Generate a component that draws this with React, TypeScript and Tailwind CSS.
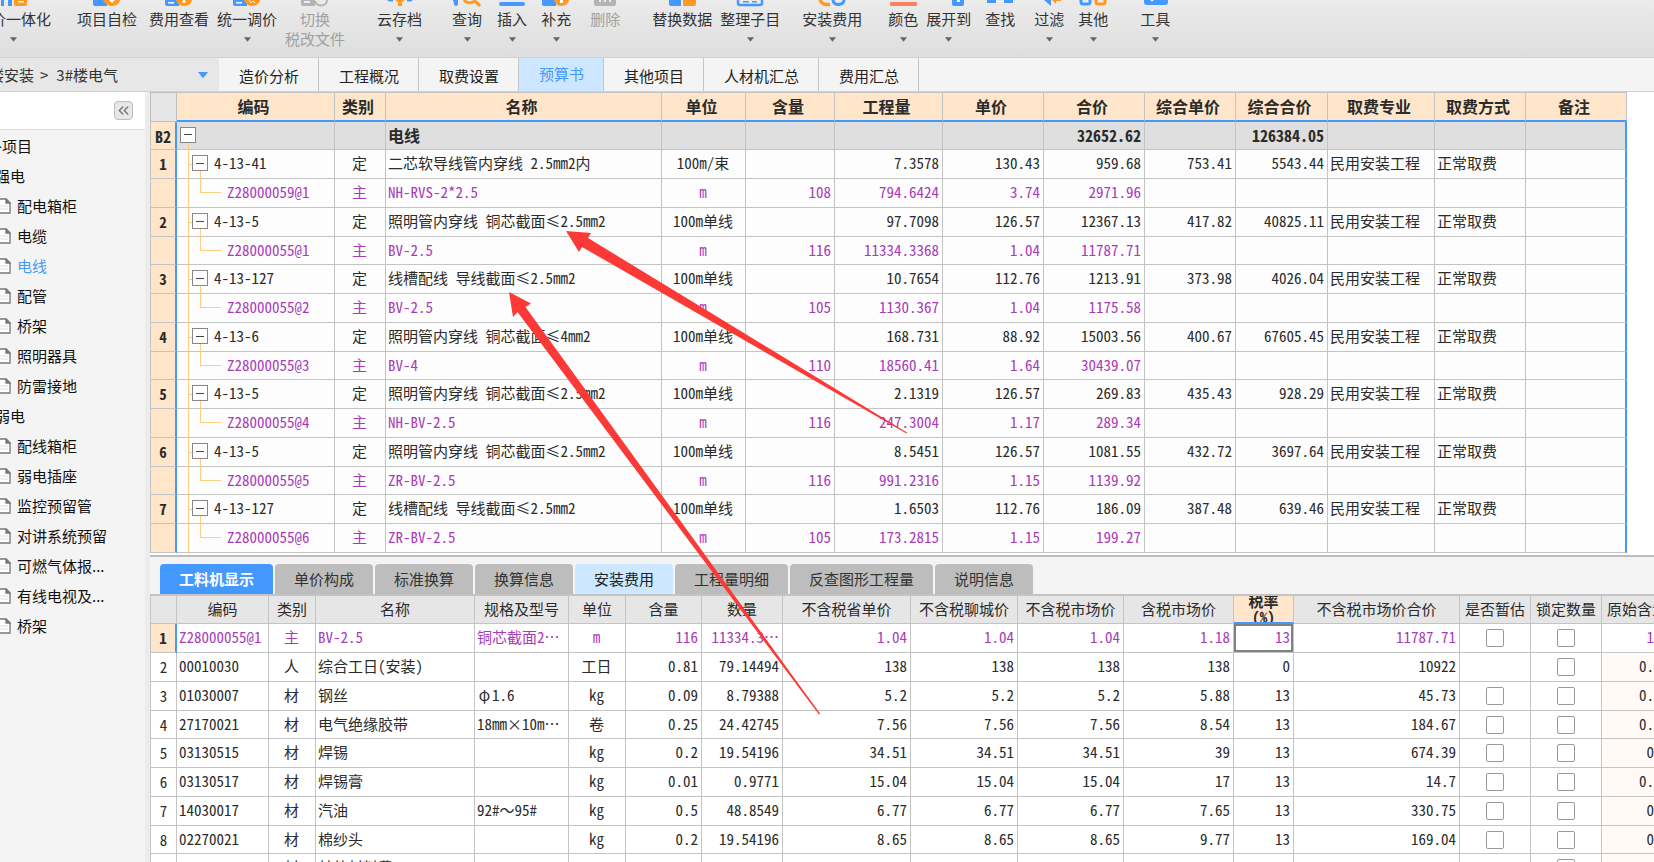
import type { ReactNode } from "react";
import { ChevronsLeft } from "lucide-react";
import clsx from "clsx";

type ToolItem = {
  label: string;
  sub?: string;
  gap: string;
  arrow?: boolean;
  disabled?: boolean;
  icon: ReactNode;
};

const BLUE = "#4499ff";
const ORANGE = "#ff9a1f";
const GRAY = "#b4b4b4";

// ツールバー
const toolItems: ToolItem[] = [
  {
    label: "量价一体化", gap: "-ml-6", arrow: true,
    icon: <><path d="M1 0h3v6H1zM8 0h4v6H8z" fill={BLUE} /><path d="M14 0h13v4a2 2 0 0 1-2 2h-9a2 2 0 0 1-2-2z" fill={ORANGE} /><path d="M18 1h6v1.500h-6z" fill="#fff" /></>,
  },
  {
    label: "项目自检", gap: "ml-6.5",
    icon: <><path d="M0 0h14v6H2a2 2 0 0 1-2-2z" fill={BLUE} /><path d="M10 0h17c0 3-4 6-8 6s-7-2-9-6z" fill={ORANGE} /><path d="M16 0h6l-3 3z" fill="#fff" /></>,
  },
  {
    label: "费用查看", gap: "ml-3",
    icon: <><path d="M0 0h14v6H2a2 2 0 0 1-2-2z" fill={BLUE} /><path d="M3 2h6v1.500H3z" fill="#fff" /><path d="M11 0h16c0 3-4 6-8 6s-7-3-8-6z" fill={ORANGE} /><circle cx="19" cy="1.500" r="1.500" fill="#fff" /></>,
  },
  {
    label: "统一调价", gap: "ml-2", arrow: true,
    icon: <><path d="M0 0h14v6H2a2 2 0 0 1-2-2z" fill={BLUE} /><path d="M3 2h6v1.500H3z" fill="#fff" /><path d="M11 0h16c0 3-4 6-8 6s-7-3-8-6z" fill={ORANGE} /><path d="M16 0l2 3 2-2 2 2" stroke="#fff" fill="none" /></>,
  },
  {
    label: "切换", sub: "税改文件", gap: "ml-2", disabled: true,
    icon: <><path d="M0 0h14v6H2a2 2 0 0 1-2-2z" fill={GRAY} /><path d="M3 1h6v2H3z" fill="#eee" /><path d="M14 1c1 3 3 4.500 6 4.500s6-2 6-5.500" stroke={GRAY} strokeWidth="2" fill="none" /></>,
  },
  {
    label: "云存档", gap: "ml-8", arrow: true,
    icon: <><path d="M1 0h6v1.500H3zM21 0h6l-2 1.500h-4z" fill={BLUE} /><path d="M9 0h10l-3 2v4h-4V2z" fill={ORANGE} /></>,
  },
  {
    label: "查询", gap: "ml-7.5", arrow: true,
    icon: <><path d="M0 0h5v4a2 2 0 0 1-4 0z" fill={BLUE} /><path d="M11 0c2 3 7 4 11 1l5 5" stroke={ORANGE} strokeWidth="3" fill="none" /></>,
  },
  { label: "插入", gap: "ml-3.75", arrow: true, icon: <rect x="1" y="2" width="26" height="4" rx="2" fill={BLUE} /> },
  {
    label: "补充", gap: "ml-3.5", arrow: true,
    icon: <><path d="M0 0h14v6H2a2 2 0 0 1-2-2z" fill={BLUE} /><path d="M12 0h15c0 3-4 6-8 6s-6-3-7-6z" fill={ORANGE} /><path d="M18 0h3v3h-3z" fill="#fff" /></>,
  },
  {
    label: "删除", gap: "ml-4.75", disabled: true,
    icon: <><path d="M3 0h22v4a2 2 0 0 1-2 2H5a2 2 0 0 1-2-2z" fill={GRAY} /><path d="M8 0h2v2H8zM13 0h2v2h-2zM18 0h2v2h-2z" fill="#eee" /></>,
  },
  {
    label: "替换数据", gap: "ml-8",
    icon: <><path d="M1 0h12v6H3a2 2 0 0 1-2-2z" fill={BLUE} /><path d="M15 0h13v4a2 2 0 0 1-2 2H15z" fill={ORANGE} /></>,
  },
  {
    label: "整理子目", gap: "ml-2", arrow: true,
    icon: <><path d="M2 0v3a2 2 0 0 0 2 2h20a2 2 0 0 0 2-2V0" stroke={BLUE} strokeWidth="2.500" fill="none" /><path d="M7 1h6v1.500H7zM16 1h5v1.500h-5z" fill={BLUE} /></>,
  },
  {
    label: "安装费用", gap: "ml-5.5", arrow: true,
    icon: <><path d="M2 0c1 3 5 5 10 4.500" stroke={ORANGE} strokeWidth="3.500" fill="none" /><path d="M15 0c0 3 3 5 6 4.500s5-2 5-4.500" stroke={BLUE} strokeWidth="3" fill="none" /></>,
  },
  { label: "颜色", gap: "ml-6.5", arrow: true, icon: <rect x="1" y="2" width="27" height="4" rx="1" fill="#fa8064" /> },
  {
    label: "展开到", gap: "ml-2", arrow: true,
    icon: <><path d="M17 0h12v4a2 2 0 0 1-2 2h-8a2 2 0 0 1-2-2z" fill={BLUE} /><path d="M22 0h3v2h-3z" fill="#fff" /></>,
  },
  { label: "查找", gap: "ml-3.5", icon: <path d="M1 0h9v3H1zM18 0h9v3h-9z" fill={BLUE} /> },
  {
    label: "过滤", gap: "ml-4.75", arrow: true,
    icon: <><path d="M9 0h7v6z" fill={BLUE} /><path d="M17 0h9v1h-5v3z" fill={ORANGE} /></>,
  },
  {
    label: "其他", gap: "ml-3.5", arrow: true,
    icon: <><path d="M2 0v2a2 2 0 0 0 2 2h5a2 2 0 0 0 2-2V0" stroke={BLUE} strokeWidth="3" fill="none" /><path d="M17 0v2a2 2 0 0 0 2 2h5a2 2 0 0 0 2-2V0" stroke={ORANGE} strokeWidth="3" fill="none" /></>,
  },
  {
    label: "工具", gap: "ml-8", arrow: true,
    icon: <><path d="M3 0h24v2a3 3 0 0 1-3 3H6a3 3 0 0 1-3-3z" fill={BLUE} /><path d="M9 0h4l-2 1.500z" fill="#fff" /></>,
  },
];

const mainTabs = ["造价分析", "工程概况", "取费设置", "预算书", "其他项目", "人材机汇总", "费用汇总"];

const treeItems = [
  { label: "补项目", className: "-ml-[13px]" },
  { label: "强电", className: "-ml-[5px]" },
  { label: "配电箱柜", doc: true },
  { label: "电缆", doc: true },
  { label: "电线", doc: true, active: true },
  { label: "配管", doc: true },
  { label: "桥架", doc: true },
  { label: "照明器具", doc: true },
  { label: "防雷接地", doc: true },
  { label: "弱电", className: "-ml-[5px]" },
  { label: "配线箱柜", doc: true },
  { label: "弱电插座", doc: true },
  { label: "监控预留管", doc: true },
  { label: "对讲系统预留", doc: true },
  { label: "可燃气体报...", doc: true },
  { label: "有线电视及...", doc: true },
  { label: "桥架", doc: true },
];

const budgetColumns = [
  { title: "编码", width: "w-[158px]" },
  { title: "类别", width: "w-[51px]" },
  { title: "名称", width: "" },
  { title: "单位", width: "w-[84px]" },
  { title: "含量", width: "w-[89px]" },
  { title: "工程量", width: "w-[108px]" },
  { title: "单价", width: "w-[101px]" },
  { title: "合价", width: "w-[101px]" },
  { title: "综合单价", width: "w-[91px]" },
  { title: "综合合价", width: "w-[92px]" },
  { title: "取费专业", width: "w-[107px]" },
  { title: "取费方式", width: "w-[91px]" },
  { title: "备注", width: "w-[101px]" },
];

// no, 编码, 类别, 名称, 单位, 含量, 工程量, 单价, 合价, 综合单价, 综合合价
const budgetRows = [
  ["B2", "", "", "电线", "", "", "", "", "32652.62", "", "126384.05"],
  ["1", "4-13-41", "定", "二芯软导线管内穿线 2.5mm2内", "100m/束", "", "7.3578", "130.43", "959.68", "753.41", "5543.44"],
  ["", "Z28000059@1", "主", "NH-RVS-2*2.5", "m", "108", "794.6424", "3.74", "2971.96", "", ""],
  ["2", "4-13-5", "定", "照明管内穿线 铜芯截面≤2.5mm2", "100m单线", "", "97.7098", "126.57", "12367.13", "417.82", "40825.11"],
  ["", "Z28000055@1", "主", "BV-2.5", "m", "116", "11334.3368", "1.04", "11787.71", "", ""],
  ["3", "4-13-127", "定", "线槽配线 导线截面≤2.5mm2", "100m单线", "", "10.7654", "112.76", "1213.91", "373.98", "4026.04"],
  ["", "Z28000055@2", "主", "BV-2.5", "m", "105", "1130.367", "1.04", "1175.58", "", ""],
  ["4", "4-13-6", "定", "照明管内穿线 铜芯截面≤4mm2", "100m单线", "", "168.731", "88.92", "15003.56", "400.67", "67605.45"],
  ["", "Z28000055@3", "主", "BV-4", "m", "110", "18560.41", "1.64", "30439.07", "", ""],
  ["5", "4-13-5", "定", "照明管内穿线 铜芯截面≤2.5mm2", "100m单线", "", "2.1319", "126.57", "269.83", "435.43", "928.29"],
  ["", "Z28000055@4", "主", "NH-BV-2.5", "m", "116", "247.3004", "1.17", "289.34", "", ""],
  ["6", "4-13-5", "定", "照明管内穿线 铜芯截面≤2.5mm2", "100m单线", "", "8.5451", "126.57", "1081.55", "432.72", "3697.64"],
  ["", "Z28000055@5", "主", "ZR-BV-2.5", "m", "116", "991.2316", "1.15", "1139.92", "", ""],
  ["7", "4-13-127", "定", "线槽配线 导线截面≤2.5mm2", "100m单线", "", "1.6503", "112.76", "186.09", "387.48", "639.46"],
  ["", "Z28000055@6", "主", "ZR-BV-2.5", "m", "105", "173.2815", "1.15", "199.27", "", ""],
];

const detailTabs = ["工料机显示", "单价构成", "标准换算", "换算信息", "安装费用", "工程量明细", "反查图形工程量", "说明信息"];

const detailColumns = [
  { title: "编码", width: "w-[92px]" },
  { title: "类别", width: "w-[47px]" },
  { title: "名称", width: "" },
  { title: "规格及型号", width: "w-[94px]" },
  { title: "单位", width: "w-[57px]" },
  { title: "含量", width: "w-[76px]" },
  { title: "数量", width: "w-[81px]" },
  { title: "不含税省单价", width: "w-[128px]" },
  { title: "不含税聊城价", width: "w-[107px]" },
  { title: "不含税市场价", width: "w-[106px]" },
  { title: "含税市场价", width: "w-[110px]" },
  { title: "税率(%)", width: "w-[60px]" },
  { title: "不含税市场价合价", width: "w-[166px]" },
  { title: "是否暂估", width: "w-[71px]" },
  { title: "锁定数量", width: "w-[71px]" },
  { title: "原始含量", width: "w-[71px]" },
];

type DetailRow = { cells: string[]; estimate: boolean; origin: string };

const detailRows: DetailRow[] = [
  { cells: ["Z28000055@1", "主", "BV-2.5", "铜芯截面2…", "m", "116", "11334.3…", "1.04", "1.04", "1.04", "1.18", "13", "11787.71"], estimate: true, origin: "116" },
  { cells: ["00010030", "人", "综合工日(安装)", "", "工日", "0.81", "79.14494", "138", "138", "138", "138", "0", "10922"], estimate: false, origin: "0.81" },
  { cells: ["01030007", "材", "钢丝", "φ1.6", "kg", "0.09", "8.79388", "5.2", "5.2", "5.2", "5.88", "13", "45.73"], estimate: true, origin: "0.09" },
  { cells: ["27170021", "材", "电气绝缘胶带", "18mm×10m…", "卷", "0.25", "24.42745", "7.56", "7.56", "7.56", "8.54", "13", "184.67"], estimate: true, origin: "0.25" },
  { cells: ["03130515", "材", "焊锡", "", "kg", "0.2", "19.54196", "34.51", "34.51", "34.51", "39", "13", "674.39"], estimate: true, origin: "0.2" },
  { cells: ["03130517", "材", "焊锡膏", "", "kg", "0.01", "0.9771", "15.04", "15.04", "15.04", "17", "13", "14.7"], estimate: true, origin: "0.01" },
  { cells: ["14030017", "材", "汽油", "92#～95#", "kg", "0.5", "48.8549", "6.77", "6.77", "6.77", "7.65", "13", "330.75"], estimate: true, origin: "0.5" },
  { cells: ["02270021", "材", "棉纱头", "", "kg", "0.2", "19.54196", "8.65", "8.65", "8.65", "9.77", "13", "169.04"], estimate: true, origin: "0.2" },
  { cells: ["", "材", "其他材料费", "", "", "", "", "", "", "", "", "", ""], estimate: false, origin: "" },
];

function Caret({ className }: { className?: string }) {
  return (
    <svg viewBox="0 0 8 5" className={className} fill="currentColor" aria-hidden="true">
      <path d="M0 0h8L4 5z" />
    </svg>
  );
}

function DocIcon() {
  return (
    <svg viewBox="0 0 14 16" className="w-3.5 h-4 shrink-0" fill="#fff" stroke="#777" strokeWidth="1.3" aria-hidden="true">
      <path d="M1 1h8l4 4v10H1z" />
      <path d="M9 1v4h4z" fill="#777" />
      <path d="M3 8h8M3 11h8" stroke="#ddd" strokeWidth="1" />
    </svg>
  );
}

function Toolbar() {
  return (
    <header className="flex shrink-0 h-[58px] overflow-hidden bg-linear-to-b from-[#ebebeb] to-[#dedede] border-b border-[#d2d2d2]">
      {toolItems.map(item => (
        <button
          key={item.label}
          disabled={item.disabled}
          className={clsx("flex flex-col items-center shrink-0 whitespace-nowrap", item.gap, item.disabled ? "text-[#a0a0a0]" : "text-[#333]")}
        >
          <svg viewBox="0 0 28 6" className="w-7 h-1.5 shrink-0 overflow-visible" aria-hidden="true">{item.icon}</svg>
          <span className="mt-[3px] leading-5">{item.label}</span>
          {item.arrow && <Caret className="w-[7px] h-[5px] mt-2 text-[#666]" />}
          {item.sub && <span className="leading-5">{item.sub}</span>}
        </button>
      ))}
    </header>
  );
}

function NavBar() {
  return (
    <nav className="flex shrink-0 h-[34px] bg-[#f4f4f4] border-b border-[#d0d0d0]">
      <button className="flex items-center w-[219px] shrink-0 pt-px overflow-hidden whitespace-nowrap bg-[#e7e7e7] text-[#333]">
        <span className="-ml-[11px]">楼安装</span>
        <span className="ml-1.5">&gt;</span>
        <span className="ml-2">3#楼电气</span>
        <Caret className="w-2.5 h-2 ml-auto mr-[11px] text-[#4499ff]" />
      </button>
      {mainTabs.map(tab => (
        <button
          key={tab}
          className={clsx(
            "pl-5 pr-[19px] border-r border-[#c6c6c6] whitespace-nowrap",
            tab === "预算书" ? "bg-[#cce7ff] text-[#4499ff]" : "pt-[3px] text-[#222]",
          )}
        >
          {tab}
        </button>
      ))}
    </nav>
  );
}

function Sidebar() {
  return (
    <aside className="w-[150px] shrink-0 pr-[5px] overflow-hidden bg-[#ececec]">
      <div className="h-full bg-[#f4f4f4]">
        <div className="flex items-center justify-end h-[38px] pr-3 bg-white border-b border-[#dedede]">
          <button aria-label="收起" className="flex items-center justify-center w-[19px] h-[19px] rounded-sm border border-[#bcbcbc] bg-[#e7e7e7] text-[#777]">
            <ChevronsLeft size={17} strokeWidth={2} className="shrink-0" />
          </button>
        </div>
        <ul className="pt-px">
          {treeItems.map((item, index) => (
            <li key={index} className={item.doc ? "-ml-[3px]" : item.className}>
              <button className={clsx("flex items-center gap-1.5 h-[30px] whitespace-nowrap", item.active ? "text-[#4499ff]" : "text-[#111]")}>
                {item.doc && <DocIcon />}
                {item.label}
              </button>
            </li>
          ))}
        </ul>
      </div>
    </aside>
  );
}

// φ と ～ は全角幅で表示する
function CellText({ text }: { text: string }) {
  return text.split(/([φ～])/).map((part, i) =>
    i % 2 === 1 ? <span key={i} className="inline-block w-[15px] text-center [font-feature-settings:'fwid']">{part}</span> : part
  );
}

function ToggleBox() {
  return (
    <button aria-label="折叠" className="relative flex items-center justify-center w-4 h-4 border border-[#888] bg-white shrink-0">
      <span className="w-2 h-px bg-[#444]" />
    </button>
  );
}

// 編码セル内のツリー線
function CodeCell({ code, level }: { code: string; level: number }) {
  return (
    <td className="relative pb-0.5 border-r border-b border-[#c4c4c4]">
      <span className={clsx("absolute left-[11px] -bottom-px w-px bg-[#ffcc80]", level === 0 ? "h-2" : "top-0")} />
      {level === 1 && <span className="absolute left-[11px] top-1/2 w-1.5 h-px bg-[#ffcc80]" />}
      {level === 1 && <span className="absolute left-[23px] -bottom-px w-px h-2 bg-[#ffcc80]" />}
      {level === 2 && <span className="absolute left-[23px] top-0 w-[21px] h-1/2 border-l border-b border-[#ffcc80]" />}
      <div className={clsx("flex items-center", level === 0 && "pl-[3px]", level === 1 && "pl-[15px] gap-1.5", level === 2 && "pl-[50px]")}>
        {level < 2 && <ToggleBox />}
        {code}
      </div>
    </td>
  );
}

function BudgetTable() {
  return (
    <section className="h-[465px] shrink-0 overflow-hidden bg-white border-b-2 border-[#bdbdbd]">
      <div className="mr-[27px]">
        <table className="w-full table-fixed border-separate border-spacing-0 font-['Noto_Sans_CJK_SC',sans-serif] [font-feature-settings:'hwid'] leading-5 whitespace-nowrap text-[#2b2b2b]">
          <thead>
            <tr className="h-[30px]">
              <th className="w-[27px] bg-[#e6e6e6] border border-[#bdbdbd]" />
              {budgetColumns.map(col => (
                <th key={col.title} className={clsx("pt-0 pr-1 pb-0.5 text-base leading-5 font-bold bg-[#ffe6ca] border-t border-r border-b-2 border-[#c4c4c4] border-b-[#4499ff]", col.width)}>
                  {col.title}
                </th>
              ))}
            </tr>
          </thead>
          <tbody>
            {budgetRows.map((row, index) => {
              const level = index === 0 ? 0 : row[0] ? 1 : 2;
              return (
                <tr
                  key={index}
                  className={clsx(
                    "h-[29px] nth-[4n+1]:h-7",
                    level === 0 && "bg-[#dfdfdf] text-base leading-5 font-bold",
                    level === 1 && "bg-[#fdfdfd]",
                    level === 2 && "bg-[#fdfdfd] text-[#a93bb9]",
                  )}
                >
                  <td className="text-center font-bold bg-[#ffe6ca] border-l border-b border-r-2 border-[#c4c4c4] border-r-[#4499ff]">{row[0]}</td>
                  <CodeCell code={row[1]} level={level} />
                  {row.slice(2).map((cell, i) => (
                    <td
                      key={i}
                      className={clsx("pl-0.5 pr-[3px] pb-0.5 border-r border-b border-[#c4c4c4]", (i === 0 || i === 2) && "text-center", i > 2 && "text-right")}
                    >
                      {cell}
                    </td>
                  ))}
                  <td className="pl-0.5 pb-0.5 border-r border-b border-[#c4c4c4]">{level === 1 && "民用安装工程"}</td>
                  <td className="pl-0.5 pb-0.5 border-r border-b border-[#c4c4c4]">{level === 1 && "正常取费"}</td>
                  <td className="border-b border-r-2 border-[#c4c4c4] border-r-[#4499ff]" />
                </tr>
              );
            })}
          </tbody>
        </table>
      </div>
    </section>
  );
}

function DetailTabs() {
  return (
    <div className="flex items-end gap-0.5 h-[37px] shrink-0 pl-2.5 bg-[#f4f4f4]">
      {detailTabs.map((tab, index) => (
        <button
          key={tab}
          className={clsx(
            "h-[30px] px-[19px] rounded-t-sm whitespace-nowrap",
            index === 0 && "bg-[#4499ff] text-white font-bold",
            index === 4 && "bg-[#cce7ff] text-[#222]",
            index !== 0 && index !== 4 && "bg-[#bdbdbd] text-[#333]",
          )}
        >
          {tab}
        </button>
      ))}
    </div>
  );
}

function CheckCell({ label, show }: { label: string; show: boolean }) {
  return (
    <td className="border-r border-b border-[#c4c4c4]">
      {show && (
        <input type="checkbox" aria-label={label} className="block mx-auto appearance-none w-[18px] h-[18px] rounded-xs border border-[#999] bg-white checked:bg-[#4499ff]" />
      )}
    </td>
  );
}

function DetailTable() {
  return (
    <section className="flex-1 min-h-0 overflow-hidden bg-white">
      <table className="w-[calc(100%+19px)] table-fixed border-separate border-spacing-0 font-['Noto_Sans_CJK_SC',sans-serif] [font-feature-settings:'hwid'] leading-5 whitespace-nowrap text-[#2b2b2b]">
        <thead>
          <tr className="h-[30px] bg-[#e6e6e6]">
            <th className="w-[27px] border border-t-2 border-[#c4c4c4]" />
            {detailColumns.map(col => (
              <th
                key={col.title}
                className={clsx(
                  "p-0 border-t-2 border-r border-[#c4c4c4]",
                  col.width,
                  col.title === "税率(%)" ? "font-bold bg-[#ffe6ca] border-b-2 border-b-[#4499ff]" : "pb-0.5 font-normal border-b",
                )}
              >
                {col.title === "税率(%)" ? (
                  <div className="flex flex-col items-center justify-center h-[26px] overflow-hidden leading-4">
                    <span>税率</span>
                    <span>(%)</span>
                  </div>
                ) : (
                  col.title
                )}
              </th>
            ))}
          </tr>
        </thead>
        <tbody>
          {detailRows.map((row, index) => (
            <tr key={index} className={clsx("h-[29px] nth-[4n]:h-7", index === 0 && "text-[#a93bb9]")}>
              <td
                className={clsx(
                  "text-center border-l border-b border-[#c4c4c4] text-[#2b2b2b]",
                  index === 0 ? "bg-[#ffe6ca] font-bold border-r-2 border-r-[#4499ff]" : "border-r",
                )}
              >
                {index + 1}
              </td>
              {row.cells.map((cell, i) => (
                <td
                  key={i}
                  className={clsx(
                    "pl-0.5 pr-[3px] pb-0.5 border-r border-b border-[#c4c4c4]",
                    (i === 1 || i === 4) && "text-center",
                    i > 4 && "text-right",
                    index === 0 && i === 11 && "shadow-[inset_0_0_0_2px_#808080]",
                  )}
                >
                  <CellText text={cell} />
                </td>
              ))}
              <CheckCell label={`是否暂估 ${index + 1}`} show={row.estimate} />
              <CheckCell label={`锁定数量 ${index + 1}`} show />
              <td className={clsx("pr-[3px] pb-0.5 text-right border-r border-b border-[#c4c4c4]", index > 0 && "bg-[#fffaf5]")}>{row.origin}</td>
            </tr>
          ))}
        </tbody>
      </table>
    </section>
  );
}

// 注釈の赤い矢印
function Arrows() {
  return (
    <svg className="absolute left-0 top-0 pointer-events-none" width="920" height="730" viewBox="0 0 920 730" fill="#fb3a38" aria-hidden="true">
      <path d="M566 231L591 233L588 238L907 432.500L906.500 433.500L582 247L579 252Z" />
      <path d="M509 292L531 303.500L525.500 307L820 713.500L819 714.500L517.500 312L513 317Z" />
    </svg>
  );
}

export default function App() {
  return (
    <div className="relative flex flex-col h-screen overflow-hidden bg-white text-[15px] font-['Noto_Sans_CJK_SC',sans-serif]" lang="zh-CN">
      <Toolbar />
      <NavBar />
      <main className="flex flex-1 min-h-0">
        <Sidebar />
        <div className="flex flex-col flex-1 min-w-0">
          <BudgetTable />
          <DetailTabs />
          <DetailTable />
        </div>
      </main>
      <Arrows />
    </div>
  );
}
